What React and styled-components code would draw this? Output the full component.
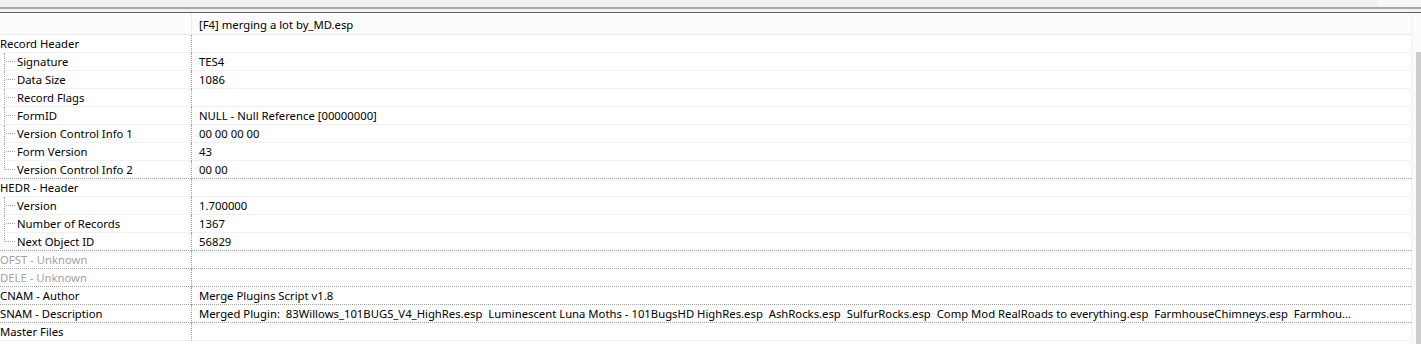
import React from 'react'
import styled, { createGlobalStyle } from 'styled-components'

const GlobalStyle = createGlobalStyle`
  html, body {
    margin: 0;
    padding: 0;
    background: #ffffff;
  }
  body {
    font-family: 'Segoe UI', 'Noto Sans', 'Open Sans', sans-serif;
    font-size: 11.3px;
    color: #000000;
    overflow: hidden;
  }
`

const rows = [
  { label: 'Record Header', value: '', level: 0 },
  { label: 'Signature', value: 'TES4', level: 1 },
  { label: 'Data Size', value: '1086', level: 1 },
  { label: 'Record Flags', value: '', level: 1 },
  { label: 'FormID', value: 'NULL - Null Reference [00000000]', level: 1 },
  { label: 'Version Control Info 1', value: '00 00 00 00', level: 1 },
  { label: 'Form Version', value: '43', level: 1 },
  { label: 'Version Control Info 2', value: '00 00', level: 1, last: true, dotted: true },
  { label: 'HEDR - Header', value: '', level: 0 },
  { label: 'Version', value: '1.700000', level: 1 },
  { label: 'Number of Records', value: '1367', level: 1 },
  { label: 'Next Object ID', value: '56829', level: 1, last: true, dotted: true },
  { label: 'OFST - Unknown', value: '', level: 0, disabled: true, dotted: true },
  { label: 'DELE - Unknown', value: '', level: 0, disabled: true, dotted: true },
  { label: 'CNAM - Author', value: 'Merge Plugins Script v1.8', level: 0, dotted: true },
  {
    label: 'SNAM - Description',
    value:
      'Merged Plugin:  83Willows_101BUGS_V4_HighRes.esp  Luminescent Luna Moths - 101BugsHD HighRes.esp  AshRocks.esp  SulfurRocks.esp  Comp Mod RealRoads to everything.esp  FarmhouseChimneys.esp  Farmhou...',
    level: 0,
    dotted: true,
  },
  { label: 'Master Files', value: '', level: 0 },
]

function App() {
  return (
    <>
      <GlobalStyle />
      <Window>
        <TopStrip>
          <StripFill />
          <StripEnd />
        </TopStrip>
        <Splitter />
        <Body>
          <Tree>
            <HeaderRow>
              <HeaderCell />
              <HeaderCell $value>[F4] merging a lot by_MD.esp</HeaderCell>
            </HeaderRow>
            {rows.map((r) => (
              <Row key={r.label} $dotted={r.dotted}>
                <LabelCell $disabled={r.disabled}>
                  {r.level > 0 && <Guide $last={r.last} />}
                  <LabelText $child={r.level > 0}>{r.label}</LabelText>
                </LabelCell>
                <ValueCell>{r.value}</ValueCell>
              </Row>
            ))}
          </Tree>
          <ScrollBar>
            <ScrollHead />
            <Thumb />
          </ScrollBar>
        </Body>
      </Window>
    </>
  )
}

const Window = styled.div`
  width: 1421px;
  height: 344px;
  display: flex;
  flex-direction: column;
  overflow: hidden;
  background: #ffffff;
`

const TopStrip = styled.div`
  height: 7px;
  display: flex;
`

const StripFill = styled.div`
  flex: 1;
  background: #f0f0f0;
`

const StripEnd = styled.div`
  width: 44px;
  background: #f6f6f6;
`

const Splitter = styled.div`
  height: 3px;
  border-top: 2px solid #a7a7a7;
  border-bottom: 1px solid #5f5f5f;
  background: #f3f3f3;
`

const Body = styled.div`
  flex: 1;
  display: flex;
  min-height: 0;
`

const Tree = styled.div`
  flex: 1;
  display: flex;
  flex-direction: column;
  min-width: 0;
`

const HeaderRow = styled.div`
  display: grid;
  grid-template-columns: 191px 1fr;
  height: 21px;
  background: #fcfcfc;
  border-bottom: 1px solid #e8e8e8;
`

const HeaderCell = styled.div`
  line-height: 21px;
  padding-top: 1px;
  padding-left: ${(p) => (p.$value ? '7px' : '0')};
  border-left: ${(p) => (p.$value ? '1px solid #ececec' : 'none')};
  white-space: nowrap;
`

const Row = styled.div`
  display: grid;
  grid-template-columns: 191px 1fr;
  height: 18px;
  box-sizing: border-box;
  border-bottom: 1px ${(p) => (p.$dotted ? 'dotted #a0a0a0' : 'solid #f2f2f2')};
`

const LabelCell = styled.div`
  position: relative;
  display: flex;
  align-items: center;
  color: ${(p) => (p.$disabled ? '#a3a3a3' : '#000000')};
  white-space: nowrap;
  overflow: hidden;
`

const Guide = styled.span`
  position: absolute;
  left: 4px;
  top: 0;
  height: ${(p) => (p.$last ? '9px' : '18px')};
  width: 10px;
  border-left: 1px dotted #a0a0a0;
  &::after {
    content: '';
    position: absolute;
    left: 1px;
    top: 8px;
    width: 9px;
    border-top: 1px dotted #a0a0a0;
  }
`

const LabelText = styled.span`
  padding-left: ${(p) => (p.$child ? '17px' : '0')};
  line-height: 17px;
`

const ValueCell = styled.div`
  border-left: 1px dotted #a0a0a0;
  margin-bottom: -1px;
  padding-left: 7px;
  line-height: 17px;
  white-space: pre;
  overflow: hidden;
`

const ScrollBar = styled.div`
  width: 9px;
  display: flex;
  flex-direction: column;
  border-left: 1px solid #f0f0f0;
  background: #fbfbfb;
`

const ScrollHead = styled.div`
  height: 39px;
  flex-shrink: 0;
`

const Thumb = styled.div`
  flex: 1;
  margin-left: 4px;
  background: #cdcdcd;
`

export default App
